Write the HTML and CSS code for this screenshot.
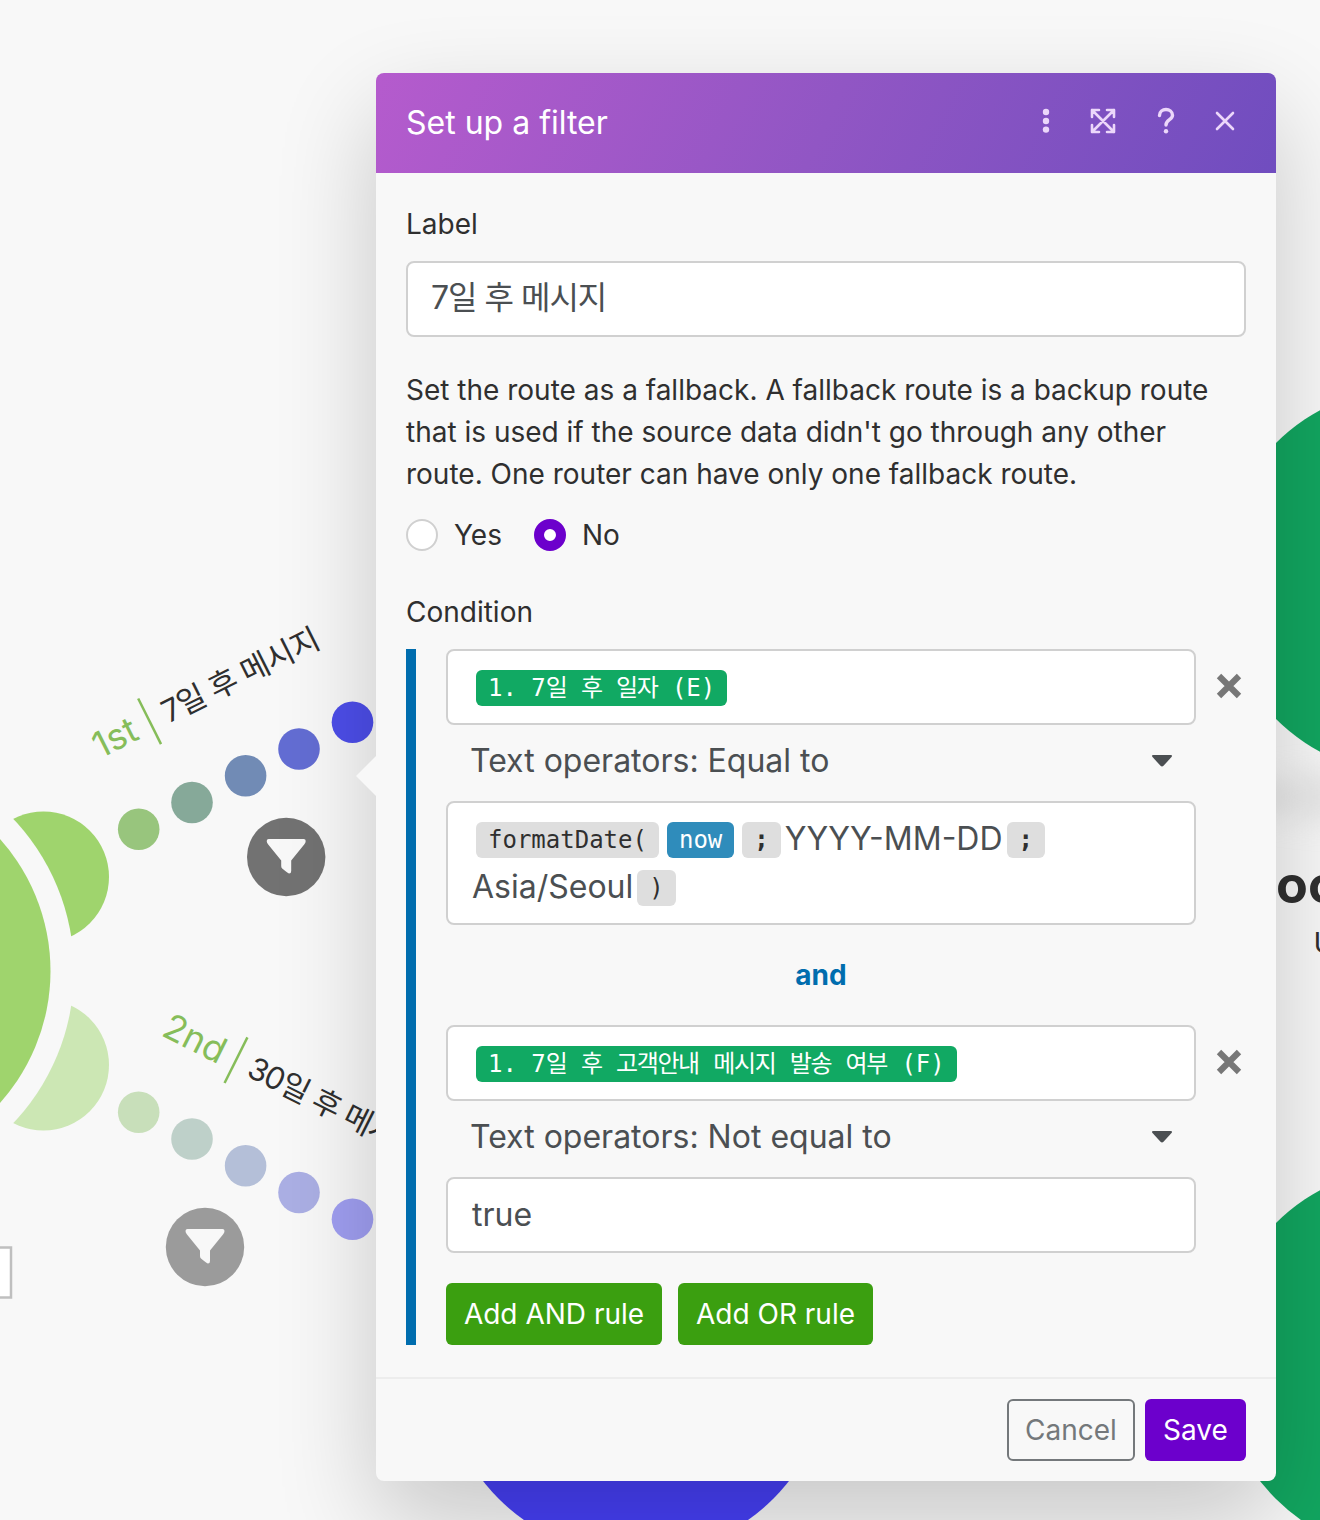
FILE: index.html
```html
<!DOCTYPE html>
<html lang="ko">
  <head>
    <meta charset="UTF-8" />
    <meta name="viewport" content="width=device-width, initial-scale=1.0" />
    <title>Set up a filter</title>
    <link rel="stylesheet" href="styles.css">
  </head>
  <body>
    <!-- Scenario canvas -->
    <svg class="canvas" width="1320" height="1520" viewBox="0 0 1320 1520">
      <defs>
        <filter id="soft" x="-50%" y="-100%" width="200%" height="300%">
          <feGaussianBlur stdDeviation="14" />
        </filter>
        <mask id="routerGap">
          <rect width="1320" height="1520" fill="#fff" />
          <circle cx="-147" cy="971" r="221" fill="#000" />
        </mask>
        <path id="funnel" d="M-17.5 -16H17.5Q19.5 -16 19.5 -14Q19.5 -12.5 18 -10.500L5 5.500V16Q5 18.500 3 18.500Q2 18.500 -4 13.500Q-5 12.500 -5 11V5.500L-18 -10.500Q-19.500 -12.500 -19.500 -14Q-19.500 -16 -17.500 -16Z" />
      </defs>

      <!-- Router -->
      <circle cx="-147" cy="971" r="197.500" fill="#9fd46d" />
      <g mask="url(#routerGap)">
        <circle cx="43.500" cy="877" r="65.500" fill="#9fd46d" />
        <circle cx="43.500" cy="1065" r="65.500" fill="#cce7b4" />
      </g>

      <!-- First route -->
      <g>
        <circle cx="138.700" cy="829.200" r="20.800" fill="#98c57d" />
        <circle cx="192" cy="802.500" r="20.800" fill="#86a999" />
        <circle cx="245.600" cy="775.800" r="20.800" fill="#718bb5" />
        <circle cx="299" cy="749" r="20.800" fill="#636dd3" />
        <circle cx="352.500" cy="722.200" r="20.800" fill="#4d4eea" />
      </g>
      <g transform="translate(102 758) rotate(-26.6)">
        <text class="route-order" x="-2" y="0">1st</text>
        <path d="M59 -37V14" stroke="#86bd5a" stroke-width="2.500" />
        <text class="route-name" x="75" y="-1" textLength="172">7일 후 메시지</text>
      </g>
      <circle cx="286.200" cy="857" r="39.200" fill="#727272" />
      <use href="#funnel" x="286.200" y="855" fill="#f8f8f8" />

      <!-- Second route -->
      <g>
        <circle cx="138.700" cy="1112.300" r="20.800" fill="#c8dfba" />
        <circle cx="192" cy="1139" r="20.800" fill="#bed0c9" />
        <circle cx="245.600" cy="1165.700" r="20.800" fill="#b4bfd8" />
        <circle cx="299" cy="1192.500" r="20.800" fill="#abafe4" />
        <circle cx="352.500" cy="1219.200" r="20.800" fill="#a09ff2" />
      </g>
      <g transform="translate(162 1036) rotate(26.600)">
        <text class="route-order" x="-2" y="0">2nd</text>
        <path d="M77 -37V14" stroke="#86bd5a" stroke-width="2.500" />
        <text class="route-name" x="92" y="-2" textLength="190">30일 후 메시지</text>
      </g>
      <circle cx="205" cy="1247" r="39.200" fill="#9b9b9b" />
      <use href="#funnel" x="205" y="1245" fill="#f8f8f8" />

      <rect x="-20" y="1247.500" width="31" height="50" fill="#fff" stroke="#bfbfbf" stroke-width="2.500" />

      <!-- Modules -->
      <ellipse cx="1413" cy="797" rx="190" ry="28" fill="#dedede" opacity=".55" filter="url(#soft)" />
      <circle cx="1413" cy="581" r="194.500" fill="#12a660" />
      <circle cx="1413" cy="1361" r="194.500" fill="#12a660" />
      <circle cx="636" cy="1361" r="194.500" fill="#463ff5" />
      <text class="module-name" x="1276" y="903">oo</text>
      <text class="module-note" x="1313.500" y="953">U</text>
    </svg>

    <div class="dialog">
      <div class="dialog-header">
        <h1>Set up a filter</h1>
        <div class="header-icons">
          <svg width="28" height="28" viewBox="0 0 28 28" fill="#ecd7fa">
            <circle cx="14" cy="5" r="3.200" />
            <circle cx="14" cy="14" r="3.200" />
            <circle cx="14" cy="22.600" r="3.200" />
          </svg>
          <svg width="28" height="28" viewBox="0 0 28 28" class="line-icon">
            <path d="M3 3L25 25M25 3L3 25M10 3H3V10M18 3H25V10M3 18V25H10M25 18V25H18" />
          </svg>
          <svg width="28" height="28" viewBox="0 0 28 28" class="line-icon question">
            <path d="M7.500 8.500C7.500 0.500 20.500 0.700 20.500 8.300C20.500 13 14 12.500 14 18" />
            <circle cx="14" cy="24.300" r="2.200" />
          </svg>
          <svg width="28" height="28" viewBox="0 0 28 28" class="line-icon">
            <path d="M6 6L22 22M22 6L6 22" />
          </svg>
        </div>
      </div>

      <div class="dialog-body">
        <label class="field-label">Label</label>
        <div class="field name-field"><span class="ko">7일 후 메시지</span></div>

        <p class="help">Set the route as a fallback. A fallback route is a backup route<br>that is used if the source data didn't go through any other<br>route. One router can have only one fallback route.</p>
        <div class="radios">
          <span class="radio"></span>
          <span class="radio-text">Yes</span>
          <span class="radio checked"></span>
          <span class="radio-text">No</span>
        </div>

        <label class="field-label">Condition</label>
        <div class="conditions">
          <div class="rule">
            <div class="rule-fields">
              <div class="field"><span class="pill green">1. 7<span class="ko">일</span> <span class="ko">후</span> <span class="ko">일자</span> (E)</span></div>
              <div class="select">
                <span>Text operators: Equal to</span>
                <svg width="22" height="14" viewBox="0 0 22 14"><path d="M2.500 1H19.500Q22 1 20.500 3L12.500 11.800Q11 13.400 9.500 11.800L1.500 3Q0 1 2.500 1Z" fill="#4b4f52" /></svg>
              </div>
              <div class="field formula"><span class="pill">formatDate(</span><span class="pill blue">now</span><span class="pill strong">;</span>YYYY-MM-DD<span class="pill strong">;</span><br><span>Asia/Seoul</span><span class="pill">)</span></div>
            </div>
            <svg class="remove" width="26" height="26" viewBox="0 0 26 26"><path d="M3 3L23 23M23 3L3 23" /></svg>
          </div>

          <div class="joiner">and</div>

          <div class="rule">
            <div class="rule-fields">
              <div class="field"><span class="pill green">1. 7<span class="ko">일</span> <span class="ko">후</span> <span class="ko">고객안내</span> <span class="ko">메시지</span> <span class="ko">발송</span> <span class="ko">여부</span> (F)</span></div>
              <div class="select">
                <span>Text operators: Not equal to</span>
                <svg width="22" height="14" viewBox="0 0 22 14"><path d="M2.500 1H19.500Q22 1 20.500 3L12.500 11.800Q11 13.400 9.500 11.800L1.500 3Q0 1 2.500 1Z" fill="#4b4f52" /></svg>
              </div>
              <div class="field">true</div>
            </div>
            <svg class="remove" width="26" height="26" viewBox="0 0 26 26"><path d="M3 3L23 23M23 3L3 23" /></svg>
          </div>

          <div class="rule-buttons">
            <button class="btn add-and">Add AND rule</button>
            <button class="btn add-or">Add OR rule</button>
          </div>
        </div>
      </div>

      <div class="dialog-footer">
        <button class="btn cancel">Cancel</button>
        <button class="btn save">Save</button>
      </div>
    </div>
  </body>
</html>
```

FILE: styles.css
```css
* {
  box-sizing: border-box;
}
body {
  margin: 0;
  width: 1320px;
  height: 1520px;
  position: relative;
  overflow: hidden;
  background-color: #f8f8f8;
  color: #2f2f2f;
  font-family: Inter, "Noto Sans CJK KR", sans-serif;
  font-size: 28px;
  line-height: 42px;
}
.canvas {
  display: block;
}
.route-order {
  font-size: 36px;
  fill: #86bd5a;
}
.route-name {
  font-size: 31px;
  fill: #2f2f2f;
}
.module-name {
  font-size: 52px;
  font-weight: 700;
  fill: #2f2f2f;
}
.module-note {
  font-size: 29px;
  fill: #2f2f2f;
}

/* Dialog floats over the canvas */
.dialog {
  position: absolute;
  left: 376px;
  top: 73px;
  width: 900px;
  height: 1408px;
  display: flex;
  flex-direction: column;
  border-radius: 8px;
  background-color: #f8f8f8;
  box-shadow: 0 40px 100px rgba(0, 0, 0, 0.2);
}
.dialog::before {
  content: "";
  position: absolute;
  left: -20px;
  top: 683px;
  border: 20px solid transparent;
  border-left: 0;
  border-right-color: #f8f8f8;
}
.dialog-header {
  height: 100px;
  flex: none;
  display: flex;
  align-items: center;
  justify-content: space-between;
  padding: 0 37px 0 30px;
  border-radius: 8px 8px 0 0;
  background: linear-gradient(115deg, #b55bcd, #9156c4 50%, #704dbf);
}
.dialog-header h1 {
  margin: 0;
  color: #fff;
  font-size: 32px;
  font-weight: 400;
}
.header-icons {
  display: flex;
  gap: 32px;
  padding-bottom: 4px;
}
.header-icons svg:first-child {
  margin-right: -3px;
}
.header-icons svg:nth-child(2) {
  margin-right: 3px;
}
.header-icons svg:nth-child(3) {
  margin-right: -1px;
}
.line-icon {
  fill: none;
  stroke: #ecd7fa;
  stroke-width: 2.6;
  stroke-linecap: round;
  stroke-linejoin: round;
}
.question path {
  stroke-width: 3.4;
}
.question circle {
  fill: #ecd7fa;
  stroke: none;
}
.dialog-body {
  flex: 1;
  padding: 30px 30px 0;
}
.field-label {
  display: block;
  margin-bottom: 16px;
}
.field {
  min-height: 76px;
  padding: 12px 24px;
  border: 2px solid #d0d0d0;
  border-radius: 8px;
  background-color: #fff;
  color: #4b4f52;
  font-size: 32px;
  line-height: 48px;
}
.name-field {
  padding: 11px 23px;
}
.name-field .ko {
  letter-spacing: -1px;
}
.help {
  margin: 32px 0 19px;
}
.radios {
  display: flex;
  align-items: center;
  margin-bottom: 35px;
}
.radio {
  width: 32px;
  height: 32px;
  border: 2px solid #d0d0d0;
  border-radius: 50%;
  background-color: #fff;
}
.radio.checked {
  border: 10px solid #6c00cc;
}
.radio-text {
  margin: 0 32px 0 16px;
}
.conditions {
  border-left: 10px solid #006dae;
  padding-left: 30px;
}
.rule {
  display: flex;
  gap: 20px;
}
.rule-fields {
  width: 750px;
}
.remove {
  margin-top: 24px;
  fill: none;
  stroke: #777;
  stroke-width: 6.2;
}
.select {
  height: 76px;
  display: flex;
  align-items: center;
  justify-content: space-between;
  padding: 0 23px 4px 24px;
  color: #4b4f52;
  font-size: 32px;
}
.pill {
  display: inline-block;
  height: 36px;
  margin: 0 4px 2px;
  padding: 0 12px;
  border-radius: 6px;
  background-color: #dedede;
  color: #2f2f2f;
  font-family: "DejaVu Sans Mono", "Noto Sans CJK KR", monospace;
  font-size: 24px;
  line-height: 36px;
  vertical-align: middle;
}
.pill.green {
  background-color: #11a963;
  color: #fff;
}
.pill.blue {
  background-color: #2f8cbb;
  color: #fff;
}
.pill.strong {
  font-weight: 700;
}
.pill .ko {
  letter-spacing: -1.4px;
}
.joiner {
  width: 750px;
  height: 100px;
  line-height: 100px;
  text-align: center;
  color: #006dae;
  font-weight: 700;
}
.rule-buttons {
  display: flex;
  gap: 16px;
  margin-top: 30px;
}
.btn {
  height: 62px;
  padding: 0;
  border: none;
  border-radius: 6px;
  color: #fff;
  font: inherit;
}
.add-and {
  width: 216px;
  background-color: #3b9f10;
}
.add-or {
  width: 195px;
  background-color: #3b9f10;
}
.dialog-footer {
  height: 104px;
  flex: none;
  display: flex;
  justify-content: flex-end;
  gap: 10px;
  padding: 20px 30px;
  border-top: 2px solid #ededed;
}
.cancel {
  width: 128px;
  border: 2px solid #74787b;
  background-color: transparent;
  color: #74787b;
}
.save {
  width: 101px;
  background-color: #6c00cc;
}
```
